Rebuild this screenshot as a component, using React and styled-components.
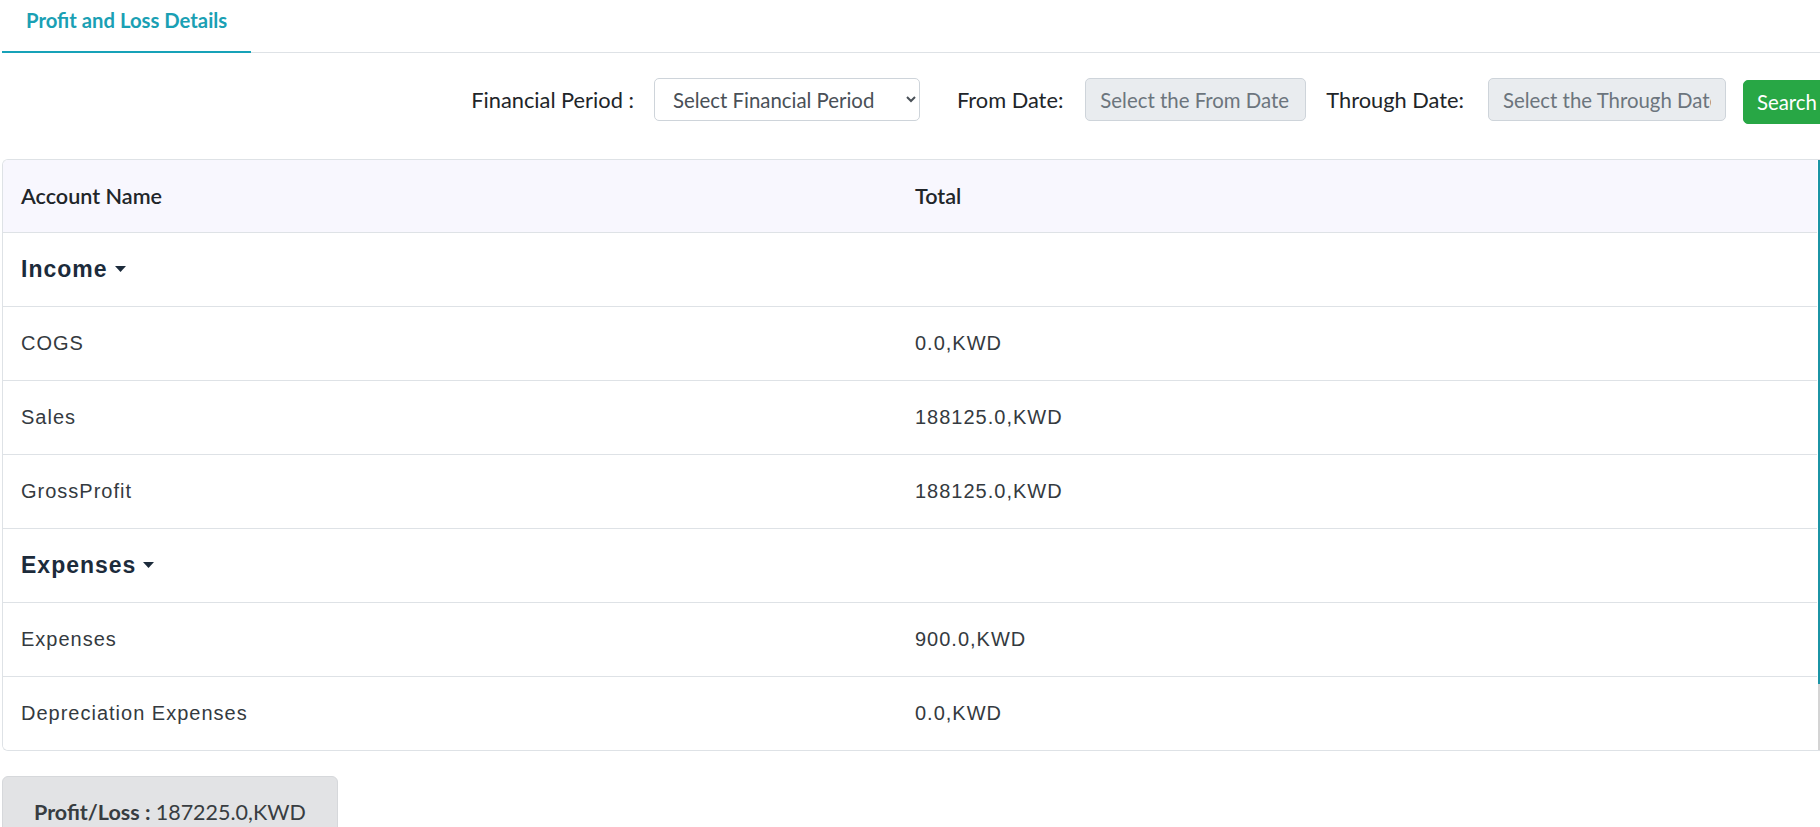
import React from "react";
import styled, { createGlobalStyle } from "styled-components";

const GlobalStyle = createGlobalStyle`
  html, body {
    margin: 0;
    padding: 0;
    background: #fff;
    overflow: hidden;
  }
  body {
    font-family: Lato, "Open Sans", sans-serif;
    color: #212529;
  }
  * {
    box-sizing: border-box;
  }
`;

const Page = styled.div`
  width: 1820px;
  padding-left: 2px;
`;

const TabBar = styled.nav`
  display: flex;
  height: 53px;
  border-bottom: 1px solid #dee2e6;
`;

const Tab = styled.a`
  display: flex;
  align-items: flex-start;
  height: 53px;
  margin-bottom: -1px;
  padding: 6px 24px 0 24px;
  font-family: Lato, sans-serif;
  font-weight: 700;
  font-size: 20.3px;
  line-height: 28px;
  color: ${(p) => (p.active ? "#1aa0b4" : "#6c757d")};
  border-bottom: 2px solid ${(p) => (p.active ? "#17a2b8" : "transparent")};
  text-decoration: none;
  cursor: pointer;
`;

const FilterBar = styled.div`
  display: flex;
  justify-content: flex-end;
  align-items: center;
  margin: 25px -13px 0 0;
  height: 43px;
`;

const FieldLabel = styled.label`
  font-family: Lato, sans-serif;
  font-size: 21.8px;
  color: #212529;
  margin-left: ${(p) => p.gapBefore || 0}px;
  margin-right: ${(p) => p.gapAfter || 20}px;
  white-space: nowrap;
`;

const Select = styled.select`
  width: 266px;
  height: 43px;
  padding: 0 12px 0 14px;
  font-family: Lato, sans-serif;
  font-size: 20.4px;
  color: #495057;
  background: #fff;
  border: 1px solid #ced4da;
  border-radius: 5px;
  outline: none;
`;

const DateInput = styled.input`
  width: ${(p) => p.width}px;
  height: 43px;
  padding: 0 14px;
  font-family: Lato, sans-serif;
  font-size: 20.4px;
  color: #495057;
  background: #e9ecef;
  border: 1px solid #ced4da;
  border-radius: 5px;
  outline: none;

  &::placeholder {
    color: #6c757d;
    opacity: 1;
  }
`;

const SearchButton = styled.button`
  height: 44px;
  margin: 4px 0 0 17px;
  padding: 0 15px 0 13px;
  font-family: Lato, sans-serif;
  font-size: 20.4px;
  color: #fff;
  background: #28a745;
  border: 1px solid #28a745;
  border-radius: 5px;
  cursor: pointer;
`;

const TableCard = styled.div`
  display: flex;
  margin-top: 38px;
  border: 1px solid #dee2e6;
  border-right: none;
  border-radius: 6px 0 0 6px;
  overflow: hidden;
`;

const TableBody = styled.div`
  flex: 1;
  padding-right: 1px;
`;

const Row = styled.div`
  display: grid;
  grid-template-columns: 894px 1fr;
  align-items: center;
  height: ${(p) => (p.kind === "header" ? 72 : 74)}px;
  border-top: ${(p) => (p.kind === "header" ? "none" : "1px solid #dee2e6")};
  background: ${(p) => (p.kind === "header" ? "#f8f7fe" : "#fff")};
`;

const Cell = styled.div`
  padding-left: 18px;
  white-space: nowrap;
`;

const HeadText = styled.span`
  font-family: Lato, sans-serif;
  font-weight: 600;
  font-size: 21.6px;
  color: #212529;
`;

const GroupTitle = styled.span`
  display: inline-flex;
  align-items: center;
  gap: 7px;
  font-family: "Liberation Sans", Arial, sans-serif;
  font-weight: 700;
  font-size: 23px;
  letter-spacing: 1px;
  color: #1c2b3b;
  cursor: pointer;
`;

const Caret = styled.svg`
  width: 11px;
  height: 6px;
  margin-top: -2px;
`;

const ItemText = styled.span`
  font-family: "Liberation Sans", Arial, sans-serif;
  font-size: 20px;
  letter-spacing: 1px;
  color: #343a40;
`;

const ScrollRail = styled.div`
  width: 2px;
  background: #d4d4d4;
`;

const RailThumb = styled.div`
  height: 524px;
  background: #1b94a5;
`;

const Summary = styled.div`
  display: inline-block;
  margin-top: 25px;
  padding: 22px 31px 24px 31px;
  font-family: Lato, sans-serif;
  font-size: 21.5px;
  color: #383d41;
  background: #e2e3e5;
  border: 1px solid #d6d8db;
  border-radius: 6px;

  b {
    font-weight: 700;
  }
`;

const rows = [
  { kind: "group", name: "Income" },
  { kind: "item", name: "COGS", total: "0.0,KWD" },
  { kind: "item", name: "Sales", total: "188125.0,KWD" },
  { kind: "item", name: "GrossProfit", total: "188125.0,KWD" },
  { kind: "group", name: "Expenses" },
  { kind: "item", name: "Expenses", total: "900.0,KWD" },
  { kind: "item", name: "Depreciation Expenses", total: "0.0,KWD" },
];

export default function App() {
  return (
    <Page>
      <GlobalStyle />
      <TabBar>
        <Tab active>Profit and Loss Details</Tab>
      </TabBar>

      <FilterBar>
        <FieldLabel>Financial Period :</FieldLabel>
        <Select defaultValue="">
          <option value="">Select Financial Period</option>
        </Select>
        <FieldLabel gapBefore={37} gapAfter={22}>
          From Date:
        </FieldLabel>
        <DateInput width={221} readOnly placeholder="Select the From Date" />
        <FieldLabel gapBefore={20} gapAfter={24}>
          Through Date:
        </FieldLabel>
        <DateInput width={238} readOnly placeholder="Select the Through Date" />
        <SearchButton>Search</SearchButton>
      </FilterBar>

      <TableCard>
        <TableBody>
          <Row kind="header">
            <Cell>
              <HeadText>Account Name</HeadText>
            </Cell>
            <Cell>
              <HeadText>Total</HeadText>
            </Cell>
          </Row>
          {rows.map((r, i) =>
            r.kind === "group" ? (
              <Row key={i} kind="group">
                <Cell>
                  <GroupTitle>
                    {r.name}
                    <Caret viewBox="0 0 11 6">
                      <path d="M0 0h11L5.5 6z" fill="#1c2b3b" />
                    </Caret>
                  </GroupTitle>
                </Cell>
                <Cell />
              </Row>
            ) : (
              <Row key={i} kind="item">
                <Cell>
                  <ItemText>{r.name}</ItemText>
                </Cell>
                <Cell>
                  <ItemText>{r.total}</ItemText>
                </Cell>
              </Row>
            )
          )}
        </TableBody>
        <ScrollRail>
          <RailThumb />
        </ScrollRail>
      </TableCard>

      <Summary>
        <b>Profit/Loss : </b>187225.0,KWD
      </Summary>
    </Page>
  );
}
